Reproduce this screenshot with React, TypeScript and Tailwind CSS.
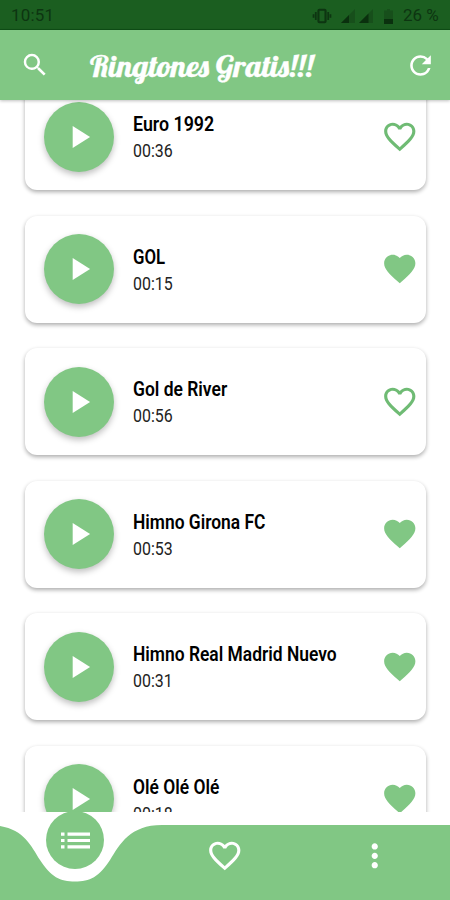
import {
  MdFavorite,
  MdFavoriteBorder,
  MdMoreVert,
  MdPlayArrow,
  MdRefresh,
  MdSearch,
} from "react-icons/md";

const ringtones = [
  { name: "Euro 1992", time: "00:36", liked: false, fit: "scale-x-[0.89]" },
  { name: "GOL", time: "00:15", liked: true, fit: "scale-x-[0.84]" },
  { name: "Gol de River", time: "00:56", liked: false, fit: "scale-x-[0.873]" },
  { name: "Himno Girona FC", time: "00:53", liked: true, fit: "scale-x-[0.87]" },
  {
    name: "Himno Real Madrid Nuevo",
    time: "00:31",
    liked: true,
    fit: "scale-x-[0.871]",
  },
  { name: "Olé Olé Olé", time: "00:18", liked: true, fit: "scale-x-[0.87]" },
];

function StatusBar() {
  return (
    <div className="h-[30px] shrink-0 bg-[#1b5e20] border-b border-[#0f4f16] flex items-center justify-between pl-[11px] pr-[10px] pt-[3px] text-[#0d3511] text-[17px]">
      <span className="tracking-[0.2px]">10:51</span>
      <div className="flex items-center">
        <svg width="20" height="16" viewBox="0 0 22 18" fill="none" stroke="#0d3511">
          <rect x="7" y="2" width="8" height="14" rx="1" strokeWidth="2.4" />
          <path d="M4 4.5v9M18 4.5v9M1.5 7v4M20.5 7v4" strokeWidth="2" />
        </svg>
        <svg className="ml-[9px]" width="14" height="14" viewBox="0 0 14 14">
          <path d="M14 0v14H0z" fill="#174f1b" />
          <path d="M8 6v8H0z" fill="#0a300e" />
        </svg>
        <svg className="ml-[4px]" width="14" height="14" viewBox="0 0 14 14">
          <path d="M14 0v14H0z" fill="#174f1b" />
          <path d="M9.5 4.5V14H0z" fill="#0a300e" />
        </svg>
        <svg className="ml-[11px]" width="9" height="15" viewBox="0 0 9 15">
          <path d="M3 0h3v1.5h3V15H0V1.5h3z" fill="#174f1b" />
          <path d="M0 10h9v5H0z" fill="#0a300e" />
        </svg>
        <span className="ml-[10px] w-[37px] whitespace-nowrap text-[17px]">
          26 %
        </span>
      </div>
    </div>
  );
}

function Header() {
  return (
    <header className="relative z-10 h-[70px] shrink-0 bg-[#81c784] flex items-center pl-[20px] pr-[14px] text-white shadow-[0_1px_3px_rgba(0,0,0,0.25)]">
      <MdSearch size={30} />
      <svg className="ml-[35px]" width="240" height="60" viewBox="0 0 240 60">
        <text
          x="5"
          y="42"
          textLength="223"
          lengthAdjust="spacingAndGlyphs"
          fill="#fff"
          stroke="#fff"
          strokeWidth="0.4"
          className="font-['Lobster','Liberation_Serif',serif] text-[30px]"
        >
          Ringtones Gratis!!!
        </text>
      </svg>
      <MdRefresh size={31} className="ml-auto" />
    </header>
  );
}

function RingtoneCard({ item }) {
  return (
    <div className="h-[107px] shrink-0 rounded-[12px] bg-white flex items-center pl-[19px] pr-[8px] shadow-[0_2px_4px_rgba(0,0,0,0.33)]">
      <button className="size-[70px] shrink-0 rounded-full bg-[#81c784] text-white flex items-center justify-center shadow-[0_3px_6px_rgba(0,0,0,0.25)]">
        <MdPlayArrow size={38} />
      </button>
      <div className="ml-[19px] flex-1 self-start pt-[28px] text-black">
        <div
          className={`mb-[2px] origin-left whitespace-nowrap text-[20px] leading-[26px] font-semibold ${item.fit}`}
        >
          {item.name}
        </div>
        <div className="origin-left scale-x-[0.91] text-[17.5px] leading-6 text-[#222]">
          {item.time}
        </div>
      </div>
      {item.liked ? (
        <MdFavorite size={37.5} color="#81c784" />
      ) : (
        <MdFavoriteBorder size={37.5} color="#6fbb74" />
      )}
    </div>
  );
}

function BottomNav() {
  return (
    <nav className="relative h-[88px] shrink-0 bg-white text-white">
      <svg className="block" width="450" height="88" viewBox="0 0 450 88">
        <path
          d="M-12 13C22 13 30 32 40 48C51 65 60 69.500 75 69.500C90 69.500 99 65 110 48C120 32 130 13 162 13H450V88H-12Z"
          fill="#81c784"
        />
      </svg>
      <div className="absolute inset-0 grid grid-cols-3">
        <div className="flex justify-center items-start">
          <div className="-mt-[1px] size-[58px] rounded-full bg-[#81c784] flex items-center justify-center">
            <svg width="29" height="17" viewBox="0 0 29 17" fill="#fff">
              <path d="M0 .5h3.500v3.200H0zM6.500 .5H29v3.200H6.500zM0 6.900h3.500v3.200H0zM6.500 6.900H29v3.200H6.500zM0 13.300h3.500v3.200H0zM6.500 13.300H29v3.200H6.500z" />
            </svg>
          </div>
        </div>
        <div className="flex justify-center pt-[25px]">
          <MdFavoriteBorder size={37.5} />
        </div>
        <div className="flex justify-center pt-[25px]">
          <MdMoreVert size={37.5} />
        </div>
      </div>
    </nav>
  );
}

export default function App() {
  return (
    <div className="w-[450px] h-[900px] flex flex-col overflow-hidden bg-white font-['Roboto',sans-serif]">
      <StatusBar />
      <Header />
      <main className="flex-1 min-h-0 overflow-hidden px-[25px]">
        <div className="-mt-[17px] w-[401px] flex flex-col gap-[25.5px]">
          {ringtones.map((item) => (
            <RingtoneCard key={item.name} item={item} />
          ))}
        </div>
      </main>
      <BottomNav />
    </div>
  );
}
